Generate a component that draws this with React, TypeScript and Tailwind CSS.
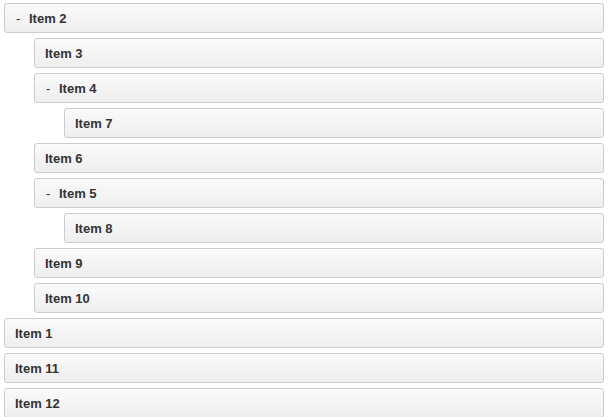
import React from "react";

type Node = { label: string; children?: Node[] };

const data: Node[] = [
  {
    label: "Item 2",
    children: [
      { label: "Item 3" },
      { label: "Item 4", children: [{ label: "Item 7" }] },
      { label: "Item 6" },
      { label: "Item 5", children: [{ label: "Item 8" }] },
      { label: "Item 9" },
      { label: "Item 10" },
    ],
  },
  { label: "Item 1" },
  { label: "Item 11" },
  { label: "Item 12" },
];

function Handle({ label, collapsible }: { label: string; collapsible: boolean }) {
  return (
    <div className="h-[30px] box-border border border-[#cccccc] rounded-[3px] bg-gradient-to-b from-[#fafafa] to-[#eeeeee] px-[10px] pt-[2px] flex items-center text-[13px] font-bold text-[#333333]">
      {collapsible && <span className="w-[14px] pl-[1px] font-normal">-</span>}
      <span>{label}</span>
    </div>
  );
}

function List({ items }: { items: Node[] }) {
  return (
    <div className="flex flex-col gap-[5px]">
      {items.map((n) => (
        <div key={n.label} className="flex flex-col gap-[5px]">
          <Handle label={n.label} collapsible={!!n.children} />
          {n.children && (
            <div className="pl-[30px]">
              <List items={n.children} />
            </div>
          )}
        </div>
      ))}
    </div>
  );
}

export default function App() {
  return (
    <div
      className="w-[608px] h-[417px] overflow-hidden bg-white pt-[3px] pl-[4px] pr-[4px]"
      style={{ fontFamily: '"Liberation Sans", Arial, sans-serif' }}
    >
      <List items={data} />
    </div>
  );
}
